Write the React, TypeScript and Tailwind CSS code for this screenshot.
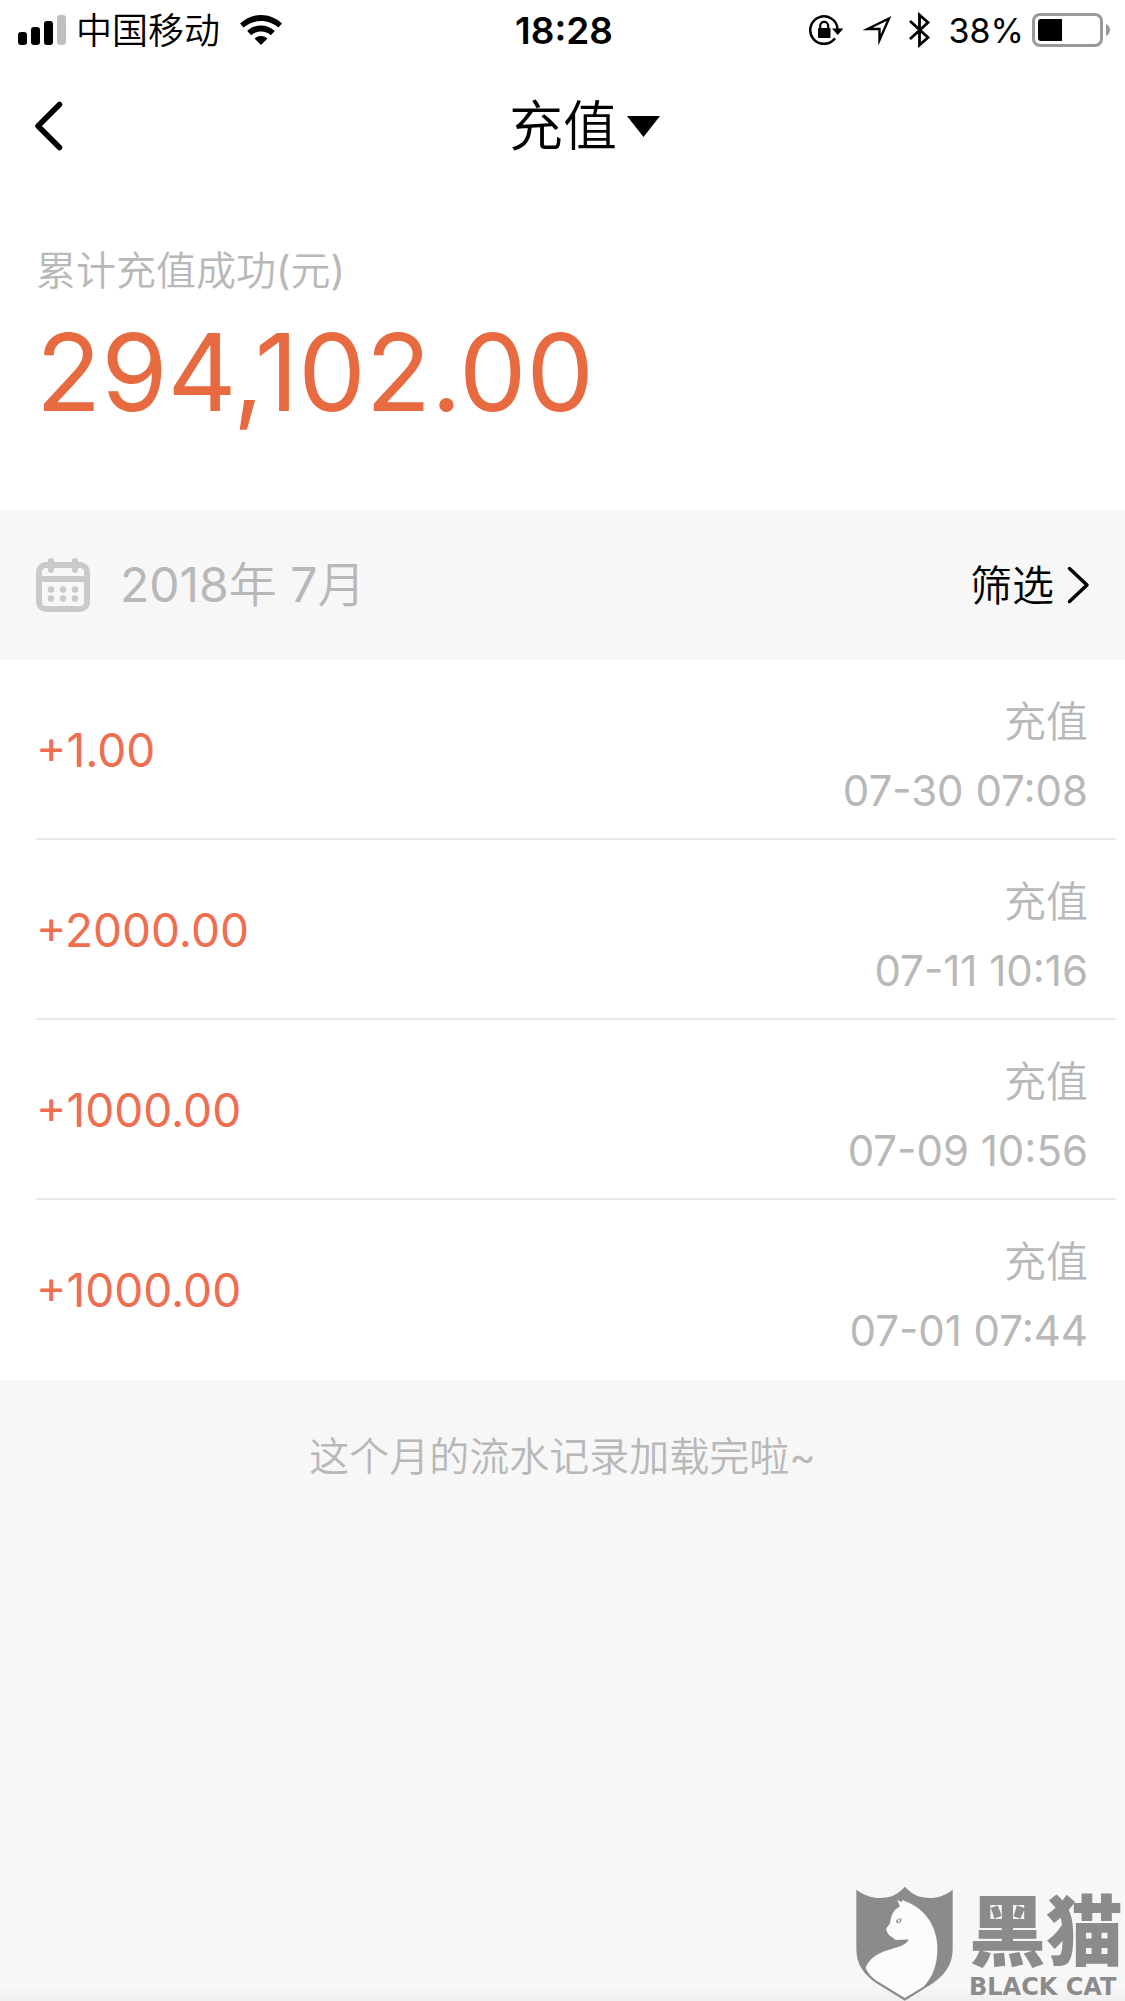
import React from "react";

const fonts =
  "font-['Inter','Noto_Sans_CJK_SC_DemiLight','Noto_Sans_CJK_SC_Light','Noto_Sans_CJK_SC',sans-serif]";

type RecordItem = { id: number; amount: string; type: string; time: string };

const records: RecordItem[] = [
  { id: 1, amount: "+1.00", type: "充值", time: "07-30 07:08" },
  { id: 2, amount: "+2000.00", type: "充值", time: "07-11 10:16" },
  { id: 3, amount: "+1000.00", type: "充值", time: "07-09 10:56" },
  { id: 4, amount: "+1000.00", type: "充值", time: "07-01 07:44" },
];

function SignalIcon() {
  return (
    <svg width="48" height="30" viewBox="0 0 48 30" aria-hidden="true">
      <rect x="0" y="17" width="9" height="13" rx="3" />
      <rect x="13" y="12" width="9" height="18" rx="3" />
      <rect x="26" y="6" width="9" height="24" rx="3" />
      <rect x="39" y="0" width="9" height="30" rx="3" fill="#bfbfbf" />
    </svg>
  );
}

function WifiIcon() {
  return (
    <svg width="42" height="30" viewBox="0 0 42 30" aria-hidden="true">
      <path d="M0 8.500C6 3 13 0 21 0s15 3 21 8.500l-3.600 4C33.500 8.500 27.500 6 21 6S8.500 8.500 3.600 12.500z" />
      <path d="M7.200 16C11 12.500 15.500 10.500 21 10.500S31 12.500 34.800 16l-4 4.200C28 17.800 25 16.500 21 16.500s-7 1.300-9.800 3.700z" />
      <path d="M14.500 23.500C16.500 21.800 18.500 21 21 21s4.500.8 6.500 2.500L21 30z" />
    </svg>
  );
}

function LockRotationIcon() {
  return (
    <svg width="34" height="30" viewBox="0 0 34 30" aria-hidden="true">
      <path d="M26 23.200A13.700 13.700 0 1 1 28.600 14" fill="none" stroke="#000" strokeWidth="2.500" />
      <path d="M23 13.500H34.500L28.700 20z" />
      <rect x="9" y="13" width="12.500" height="10" rx="1" />
      <path d="M11.200 13.500V10.800a4 4 0 0 1 8 0v2.700" fill="none" stroke="#000" strokeWidth="2.200" />
    </svg>
  );
}

function LocationIcon() {
  return (
    <svg width="30" height="30" viewBox="0 0 30 30" aria-hidden="true">
      <path d="M5.500 14L27 3.500 17.500 25V14z" fill="none" stroke="#000" strokeWidth="2.400" strokeMiterlimit="10" />
    </svg>
  );
}

function BluetoothIcon() {
  return (
    <svg width="22" height="36" viewBox="0 0 22 36" aria-hidden="true">
      <path d="M1 9L19 25.500 10.500 33V3L19 10.500 1 27" fill="none" stroke="#000" strokeWidth="2.800" strokeMiterlimit="10" />
    </svg>
  );
}

function BatteryIcon() {
  return (
    <svg width="78" height="34" viewBox="0 0 78 34" aria-hidden="true">
      <rect x="1.500" y="1.500" width="68" height="31" rx="6.500" fill="none" stroke="#999" strokeWidth="3" />
      <path d="M9 6h21v22H9a3 3 0 0 1-3-3V9a3 3 0 0 1 3-3z" />
      <path d="M74 11a6.500 6.500 0 0 1 0 12z" fill="#999" />
    </svg>
  );
}

function CalendarIcon() {
  return (
    <svg width="54" height="54" viewBox="0 0 54 54" fill="#cacaca" aria-hidden="true">
      <rect x="3" y="7" width="48" height="44" rx="7" fill="none" stroke="#cacaca" strokeWidth="6" />
      <path d="M3 18h48v6H3z" />
      <rect x="12" y="0" width="6" height="15" rx="3" />
      <rect x="36" y="0" width="6" height="15" rx="3" />
      {[15, 27, 39].map((x) => (
        <g key={x}>
          <circle cx={x} cy="31.500" r="3.200" />
          <circle cx={x} cy="40.500" r="3.200" />
        </g>
      ))}
    </svg>
  );
}

function ShieldCatIcon() {
  return (
    <svg width="97" height="115" viewBox="48 46 292 346" aria-hidden="true">
      <path
        d="M49 57C72 74 96 82 121 82c30 0 56-12 74-34 19 22 45 34 75 34 25 0 47-8 69-25v178c0 46-22 78-62 105l-82 51-83-51C71 313 49 281 49 235z"
        fill="#8c8a8b"
      />
      <path
        d="M172 87l14 8 2-7 8 4c58 20 97 75 97 141 0 50-14 87-42 116l-56 34-85-52c-15-10-27-23-33-38 8-26 33-44 66-54 26-8 54-12 64-32-16 0-28 2-41 1-4-5-10-7-16-12-6-6-11-13-11-22 3-6 8-9 11-15 2-14 6-29 14-39 5-6 11-9 16-14z"
        fill="#fcfcfc"
      />
      <path d="M168 153c3-7 9-10 17-9 1 8-3 13-9 15-3 0-6-2-8-6z" fill="#8c8a8b" />
      <path d="M173 152c2-4 5-6 9-6-3 4-3 7-4 11z" fill="#fff" />
    </svg>
  );
}

function StatusBar() {
  return (
    <div className="grid h-[60px] grid-cols-[1fr_auto_1fr] items-center pl-[18px] pr-[15px] text-[36px] leading-[48px]">
      <div className="flex items-center gap-[10px]">
        <SignalIcon />
        <span className="pt-[2px]">中国移动</span>
        <span className="ml-[10px]">
          <WifiIcon />
        </span>
      </div>
      <time className="pt-[2px] text-[37px] font-semibold">18:28</time>
      <div className="flex items-center justify-end">
        <LockRotationIcon />
        <span className="ml-[19px] mr-[17px]">
          <LocationIcon />
        </span>
        <BluetoothIcon />
        <span className="ml-[18px] mr-2 pt-[2px] text-[34px]">38%</span>
        <BatteryIcon />
      </div>
    </div>
  );
}

function NavBar() {
  return (
    <header className="grid h-[132px] grid-cols-[1fr_auto_1fr] items-center px-[34px]">
      <button type="button" aria-label="返回" className="justify-self-start">
        <svg width="29" height="50" viewBox="0 0 29 50" fill="none" aria-hidden="true">
          <path d="M25.500 3.500L4 25l21.500 21.500" stroke="#000" strokeWidth="5.500" strokeLinecap="round" strokeLinejoin="round" />
        </svg>
      </button>
      <button type="button" className="ml-11 flex items-center gap-[10px] text-[54px] leading-[72px]">
        <h1 className="pt-[2px]">充值</h1>
        <svg width="33" height="21" viewBox="0 0 33 21" aria-hidden="true">
          <path d="M0 0h33L16.500 21z" />
        </svg>
      </button>
    </header>
  );
}

export default function App() {
  return (
    <main className={`${fonts} flex min-h-screen flex-col bg-[#f7f7f7] text-black`}>
      <div className="bg-white">
        <StatusBar />
        <NavBar />
        <section className="h-[318px] px-9 pt-[52px]">
          <p className="text-[40px] leading-[54px] text-[#b8b8b8]">累计充值成功(元)</p>
          <p className="mt-[6px] text-[107px] leading-[136px] text-[#e76a40]">294,102.00</p>
        </section>
      </div>

      <div className="flex h-[150px] items-center justify-between pl-9 pr-[35px]">
        <button type="button" className="flex items-center gap-[30px] text-[48px] leading-[60px] text-[#b8b8b8]">
          <CalendarIcon />
          <span>2018年 7月</span>
        </button>
        <button type="button" className="flex items-center gap-[13px] text-[42px] leading-[60px]">
          <span className="pt-[2px]">筛选</span>
          <svg width="23" height="38" viewBox="0 0 23 38" fill="none" aria-hidden="true">
            <path d="M2.500 2.500L20 19 2.500 35.500" stroke="#000" strokeWidth="3.500" strokeLinecap="round" strokeLinejoin="round" />
          </svg>
        </button>
      </div>

      <ul className="bg-white pl-9 pr-[9px]">
        {records.map((item) => (
          <li
            key={item.id}
            className="flex h-[180px] items-center justify-between border-b-2 border-[#e9e9e9] pr-[28px] last:border-white"
          >
            <span className="pt-[2px] text-[46px] leading-[60px] text-[#ef6e50]">{item.amount}</span>
            <span className="flex flex-col items-end pt-[14px] text-[42px] leading-[69px] text-[#b8b8b8]">
              <span>{item.type}</span>
              <time>{item.time}</time>
            </span>
          </li>
        ))}
      </ul>

      <p className="pt-[50px] text-center text-[40px] leading-[54px] text-[#b8b8b8]">这个月的流水记录加载完啦~</p>

      <footer className="mt-auto flex items-end justify-end gap-4 bg-[linear-gradient(to_top,#efefef,#f7f7f7_14px)] pr-[2px] text-[#8c8a8b]">
        <ShieldCatIcon />
        <div className="flex flex-col items-start">
          <span className="mb-2 font-['Noto_Sans_CJK_SC',sans-serif] text-[77px] font-black leading-[76px]">黑猫</span>
          <span className="font-['DejaVu_Sans',sans-serif] text-[24px] font-bold leading-[28px]">BLACK CAT</span>
        </div>
      </footer>
    </main>
  );
}
